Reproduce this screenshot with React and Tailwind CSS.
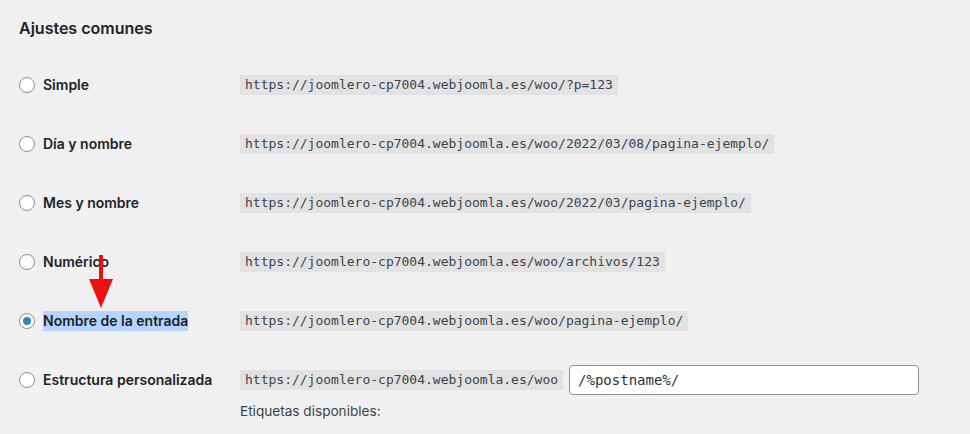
import React from 'react';

const rows = [
  { label: 'Simple', url: 'https://joomlero-cp7004.webjoomla.es/woo/?p=123' },
  { label: 'Día y nombre', url: 'https://joomlero-cp7004.webjoomla.es/woo/2022/03/08/pagina-ejemplo/' },
  { label: 'Mes y nombre', url: 'https://joomlero-cp7004.webjoomla.es/woo/2022/03/pagina-ejemplo/' },
  { label: 'Numérico', url: 'https://joomlero-cp7004.webjoomla.es/woo/archivos/123' },
  { label: 'Nombre de la entrada', url: 'https://joomlero-cp7004.webjoomla.es/woo/pagina-ejemplo/', checked: true },
];

const sans = "font-['Inter','Liberation_Sans',sans-serif]";
const mono = "font-['DejaVu_Sans_Mono','Liberation_Mono',monospace]";

const Radio = ({ checked }) => (
  <span className="w-4 h-4 rounded-full border border-[#8c8f94] bg-white flex items-center justify-center shrink-0">
    {checked && <span className="w-2 h-2 rounded-full bg-[#3582c4]" />}
  </span>
);

const Code = ({ children }) => (
  <code className={`${mono} text-[13px] leading-[20px] px-[5px] bg-[#e2e2e3] text-[#3c434a] whitespace-nowrap`}>
    {children}
  </code>
);

const App = () => {
  return (
    <div className={`${sans} relative w-[970px] h-[434px] bg-[#f0f0f1] overflow-hidden pl-[19px] pt-[18px] text-[#1d2327]`}>
      <h2 className="text-[16px] leading-[20px] font-semibold">Ajustes comunes</h2>
      <div className="mt-[17px]">
        {rows.map(r => (
          <div key={r.label} className="flex items-center h-[59px]">
            <div className="w-[221px] flex items-center gap-2">
              <Radio checked={r.checked} />
              <span className={`text-[14px] leading-[20px] font-semibold ${r.checked ? 'bg-[#b4d5fe]' : ''}`}>{r.label}</span>
            </div>
            <Code>{r.url}</Code>
          </div>
        ))}
        <div className="flex items-start mt-[15px]">
          <div className="w-[221px] flex items-center gap-2 h-[30px]">
            <Radio />
            <span className="text-[14px] leading-[20px] font-semibold">Estructura personalizada</span>
          </div>
          <div className="flex flex-col">
            <div className="flex items-center gap-[6px]">
              <Code>https://joomlero-cp7004.webjoomla.es/woo</Code>
              <input
                readOnly
                value="/%postname%/"
                className={`${mono} w-[350px] h-[30px] px-2 text-[14px] text-[#2c3338] bg-white border border-[#8c8f94] rounded-[4px] outline-none`}
              />
            </div>
            <p className="text-[13.6px] leading-[18px] text-[#3c434a] mt-[7px]">Etiquetas disponibles:</p>
          </div>
        </div>
      </div>

      {/* red arrow */}
      <div className="absolute left-[89px] top-[255px] flex flex-col items-center">
        <div className="w-[4px] h-[24px] bg-[#e8130f]" />
        <div className="w-0 h-0 border-l-[12px] border-r-[12px] border-t-[29px] border-l-transparent border-r-transparent border-t-[#e8130f]" />
      </div>
    </div>
  );
};

export default App;
